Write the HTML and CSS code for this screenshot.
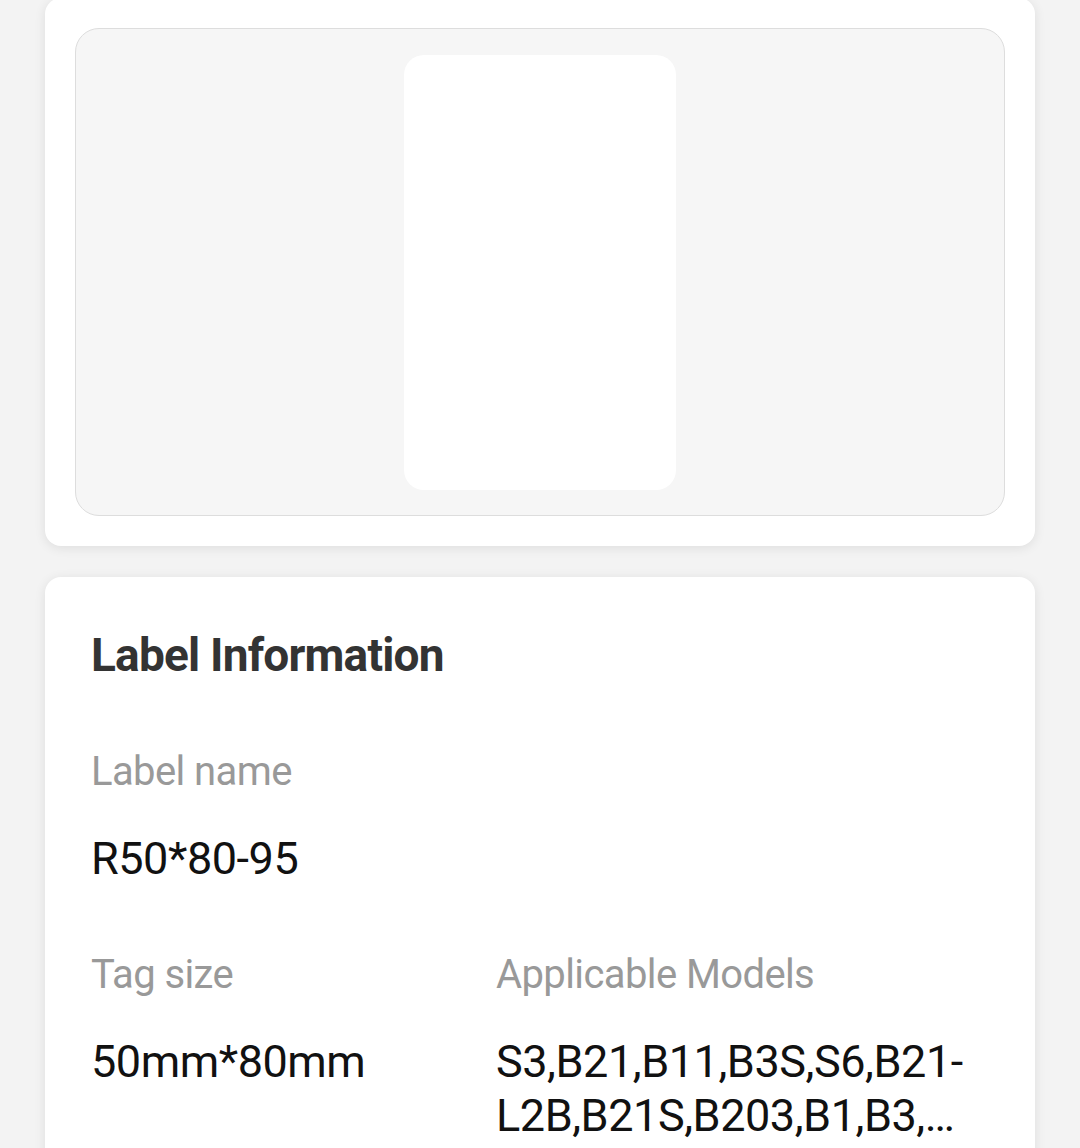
FILE: index.html
```html
<!DOCTYPE html>
<html lang="en">
<head>
<meta charset="utf-8">
<title>Label Information</title>
<link rel="stylesheet" href="styles.css">
</head>
<body>
<main class="page">
  <section class="card preview-card">
    <div class="preview-box">
      <div class="label-sheet"></div>
    </div>
  </section>
  <section class="card info-card">
    <h2 class="info-title">Label Information</h2>
    <div class="field">
      <div class="field-label">Label name</div>
      <div class="field-value">R50*80-95</div>
    </div>
    <div class="field-row">
      <div class="field">
        <div class="field-label">Tag size</div>
        <div class="field-value">50mm*80mm</div>
      </div>
      <div class="field">
        <div class="field-label">Applicable Models</div>
        <div class="field-value clamp">S3,B21,B11,B3S,S6,B21-L2B,B21S,B203,B1,B3,<wbr>B21Pro,<wbr>B3S-P,<wbr>B31,<wbr>B32</div>
      </div>
    </div>
  </section>
</main>
</body>
</html>
```
FILE: styles.css
```css
html, body {
  margin: 0;
  padding: 0;
  background: #f3f3f3;
  font-family: Roboto, "Noto Sans", "Liberation Sans", sans-serif;
}
.page {
  display: flex;
  flex-direction: column;
  gap: 31px;
  padding: 0 45px;
  margin-top: -2px;
  height: 1150px;
  overflow: hidden;
}
.card {
  background: #ffffff;
  border-radius: 16px;
  box-shadow: 0 2px 12px rgba(0, 0, 0, 0.09);
}
.preview-card {
  padding: 30px;
}
.preview-box {
  height: 486px;
  background: #f6f6f6;
  border: 1px solid #dddddd;
  border-radius: 24px;
  display: flex;
  align-items: center;
  justify-content: center;
}
.label-sheet {
  width: 272px;
  height: 435px;
  background: #ffffff;
  border-radius: 20px;
}
.info-card {
  padding: 50px 46px 60px;
}
.info-title {
  margin: 0 0 65px;
  font-size: 46px;
  line-height: 56px;
  font-weight: 700;
  letter-spacing: -0.8px;
  color: #333333;
}
.field-label {
  font-size: 40px;
  line-height: 48px;
  letter-spacing: -0.6px;
  color: #999999;
  margin-bottom: 36px;
}
.field-value {
  font-size: 45px;
  line-height: 54px;
  letter-spacing: -0.45px;
  color: #111111;
}
.field-row {
  margin-top: 65px;
  display: grid;
  grid-template-columns: 405px 1fr;
}
.clamp {
  display: -webkit-box;
  -webkit-line-clamp: 2;
  -webkit-box-orient: vertical;
  overflow: hidden;
  overflow-wrap: anywhere;
}
```
